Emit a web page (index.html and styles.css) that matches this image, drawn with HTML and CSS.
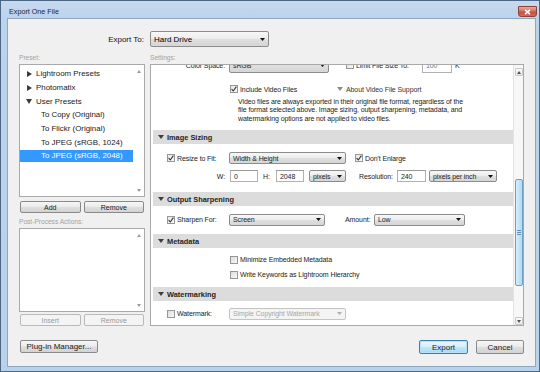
FILE: index.html
```html
<!DOCTYPE html>
<html>
<head>
<meta charset="utf-8">
<title>Export One File</title>
<link rel="stylesheet" href="styles.css">
</head>
<body>
<div class="window">
  <div class="titlebar">
    <span class="title">Export One File</span>
    <span class="close"><svg width="9" height="6" viewBox="0 0 9 6"><path d="M2 0.8 L7 5.2 M7 0.8 L2 5.2" stroke="#fff" stroke-width="1.7"/></svg></span>
  </div>
  <div class="client">
    <div class="export-row">
      <span class="export-label">Export To:</span>
      <div class="combo big"><span>Hard Drive</span><svg class="arr" width="5" height="3" viewBox="0 0 5 3"><path d="M0 0H5L2.5 3Z"/></svg></div>
    </div>

    <div class="body">
      <div class="left">
        <div class="caption">Preset:</div>
        <div class="listbox presets">
          <div class="items">
            <div class="item folder"><svg class="tri" width="5" height="6" viewBox="0 0 5 6"><path d="M0 0L5 3L0 6Z"/></svg><span>Lightroom Presets</span></div>
            <div class="item folder"><svg class="tri" width="5" height="6" viewBox="0 0 5 6"><path d="M0 0L5 3L0 6Z"/></svg><span>Photomatix</span></div>
            <div class="item folder"><svg class="tri open" width="6" height="5" viewBox="0 0 6 5"><path d="M0 0H6L3 5Z"/></svg><span>User Presets</span></div>
            <div class="item child"><span>To Copy (Original)</span></div>
            <div class="item child"><span>To Flickr (Original)</span></div>
            <div class="item child"><span>To JPEG (sRGB, 1024)</span></div>
            <div class="item child selected"><span>To JPEG (sRGB, 2048)</span></div>
          </div>
          <div class="lscroll">
            <svg width="4" height="3" viewBox="0 0 4 3"><path d="M0 3H4L2 0Z"/></svg>
            <svg width="4" height="3" viewBox="0 0 4 3"><path d="M0 0H4L2 3Z"/></svg>
          </div>
        </div>
        <div class="btn-row">
          <button class="btn small">Add</button>
          <button class="btn small">Remove</button>
        </div>
        <div class="caption cap2">Post-Process Actions:</div>
        <div class="listbox actions">
          <div class="items"></div>
          <div class="lscroll">
            <svg width="4" height="3" viewBox="0 0 4 3"><path d="M0 3H4L2 0Z"/></svg>
            <svg width="4" height="3" viewBox="0 0 4 3"><path d="M0 0H4L2 3Z"/></svg>
          </div>
        </div>
        <div class="btn-row row2">
          <button class="btn small" disabled>Insert</button>
          <button class="btn small" disabled>Remove</button>
        </div>
      </div>

      <div class="right">
        <div class="caption">Settings:</div>
        <div class="panel">
          <div class="pcontent">
            <div class="pinner">
              <div class="row r-color">
                <span class="lbl">Color Space:</span>
                <div class="combo sm tall w-color"><span>sRGB</span><svg class="arr" width="5" height="3" viewBox="0 0 5 3"><path d="M0 0H5L2.5 3Z"/></svg></div>
                <span class="cb cb-limit"></span>
                <span class="limit-text">Limit File Size To:</span>
                <div class="field tall w-limit">100</div>
                <span class="unit">K</span>
              </div>
              <div class="row r-video">
                <span class="cb checked"><svg width="6" height="6" viewBox="0 0 6 6"><path d="M0.6 3.2 L2.3 5 L5.4 0.6" fill="none" stroke="#333" stroke-width="1.1"/></svg></span>
                <span class="video-text">Include Video Files</span>
                <svg class="about-tri" width="6" height="4" viewBox="0 0 6 4"><path d="M0 0H6L3 4Z"/></svg>
                <span class="about-text">About Video File Support</span>
              </div>
              <div class="para">Video files are always exported in their original file format, regardless of the<br>file format selected above. Image sizing, output sharpening, metadata, and<br>watermarking options are not applied to video files.</div>

              <div class="sec sec-sizing"><svg class="stri" width="6" height="4" viewBox="0 0 6 4"><path d="M0 0H6L3 4Z"/></svg><span>Image Sizing</span></div>
              <div class="sbody b-sizing">
                <div class="row">
                  <span class="cb checked ind"><svg width="6" height="6" viewBox="0 0 6 6"><path d="M0.6 3.2 L2.3 5 L5.4 0.6" fill="none" stroke="#333" stroke-width="1.1"/></svg></span>
                  <span class="cblbl">Resize to Fit:</span>
                  <div class="combo sm w-fit"><span>Width &amp; Height</span><svg class="arr" width="5" height="3" viewBox="0 0 5 3"><path d="M0 0H5L2.5 3Z"/></svg></div>
                  <span class="cb checked cb-enlarge"><svg width="6" height="6" viewBox="0 0 6 6"><path d="M0.6 3.2 L2.3 5 L5.4 0.6" fill="none" stroke="#333" stroke-width="1.1"/></svg></span>
                  <span class="enlarge-text">Don't Enlarge</span>
                </div>
                <div class="row r-wh">
                  <span class="lbl wl">W:</span>
                  <div class="field w-num">0</div>
                  <span class="hl">H:</span>
                  <div class="field w-num">2048</div>
                  <div class="combo sm w-px"><span>pixels</span><svg class="arr" width="5" height="3" viewBox="0 0 5 3"><path d="M0 0H5L2.5 3Z"/></svg></div>
                  <span class="res-text">Resolution:</span>
                  <div class="field w-res">240</div>
                  <div class="combo sm w-ppi"><span>pixels per inch</span><svg class="arr" width="5" height="3" viewBox="0 0 5 3"><path d="M0 0H5L2.5 3Z"/></svg></div>
                </div>
              </div>

              <div class="sec"><svg class="stri" width="6" height="4" viewBox="0 0 6 4"><path d="M0 0H6L3 4Z"/></svg><span>Output Sharpening</span></div>
              <div class="sbody b-sharp">
                <div class="row">
                  <span class="cb checked ind"><svg width="6" height="6" viewBox="0 0 6 6"><path d="M0.6 3.2 L2.3 5 L5.4 0.6" fill="none" stroke="#333" stroke-width="1.1"/></svg></span>
                  <span class="cblbl">Sharpen For:</span>
                  <div class="combo sm w-screen"><span>Screen</span><svg class="arr" width="5" height="3" viewBox="0 0 5 3"><path d="M0 0H5L2.5 3Z"/></svg></div>
                  <span class="amount-text">Amount:</span>
                  <div class="combo sm w-low"><span>Low</span><svg class="arr" width="5" height="3" viewBox="0 0 5 3"><path d="M0 0H5L2.5 3Z"/></svg></div>
                </div>
              </div>

              <div class="sec"><svg class="stri" width="6" height="4" viewBox="0 0 6 4"><path d="M0 0H6L3 4Z"/></svg><span>Metadata</span></div>
              <div class="sbody b-meta">
                <div class="row">
                  <span class="cb meta-cb"></span>
                  <span>Minimize Embedded Metadata</span>
                </div>
                <div class="row r-write">
                  <span class="cb meta-cb"></span>
                  <span>Write Keywords as Lightroom Hierarchy</span>
                </div>
              </div>

              <div class="sec"><svg class="stri" width="6" height="4" viewBox="0 0 6 4"><path d="M0 0H6L3 4Z"/></svg><span>Watermarking</span></div>
              <div class="sbody b-wm">
                <div class="row">
                  <span class="cb ind"></span>
                  <span class="cblbl">Watermark:</span>
                  <div class="combo sm w-wm disabled"><span>Simple Copyright Watermark</span><svg class="arr" width="5" height="3" viewBox="0 0 5 3"><path d="M0 0H5L2.5 3Z"/></svg></div>
                </div>
              </div>
            </div>
          </div>
          <div class="pscroll">
            <div class="sbtn"><svg width="4" height="3" viewBox="0 0 4 3"><path d="M0 3H4L2 0Z"/></svg></div>
            <div class="thumb"><i></i><i></i><i></i></div>
            <div class="sbtn down"><svg width="4" height="3" viewBox="0 0 4 3"><path d="M0 0H4L2 3Z"/></svg></div>
          </div>
        </div>
      </div>
    </div>

    <div class="footer">
      <button class="btn plug">Plug-in Manager...</button>
      <button class="btn exp">Export</button>
      <button class="btn cancel">Cancel</button>
    </div>
  </div>
</div>
</body>
</html>
```

FILE: styles.css
```css
* { box-sizing: border-box; }
html, body { margin: 0; padding: 0; }
body {
  width: 540px;
  height: 372px;
  overflow: hidden;
  background: #b9d1ea;
  font-family: "Liberation Sans", Arial, sans-serif;
  color: #1e1e1e;
}

.window {
  width: 540px;
  height: 372px;
  border: 1px solid #4b6785;
  background: linear-gradient(#c6d9ef 0, #bcd3ec 18px, #b9d1ea 100%);
  display: flex;
  flex-direction: column;
}

.titlebar {
  height: 17px;
  flex: none;
  display: flex;
  align-items: flex-start;
  justify-content: space-between;
  padding: 0 2px 0 8px;
}
.title {
  font-size: 7.2px;
  line-height: 10px;
  margin-top: 6px;
  color: #1b2633;
}
.close {
  width: 19px;
  height: 11px;
  margin-top: 5px;
  border: 1px solid #8b4438;
  border-radius: 0 0 3px 3px;
  background: linear-gradient(#e8aa9c, #d37363 45%, #c44f3f 55%, #d06a58);
  display: flex;
  align-items: center;
  justify-content: center;
}

.client {
  flex: 1;
  margin: 0 3px 4px 6px;
  background: #f0f0f0;
  border: 1px solid #8fa6bf;
  padding: 12px 11px 0 11px;
  display: flex;
  flex-direction: column;
}

/* export to */
.export-row { display: flex; height: 16px; align-items: center; }
.export-label {
  width: 126px;
  margin-right: 5px;
  padding-right: 1px;
  text-align: right;
  font-size: 8px;
  color: #111;
}

.combo {
  display: flex;
  align-items: center;
  border: 1px solid #8c8c8c;
  border-radius: 2px;
  background: linear-gradient(#f7f7f7, #ececec 50%, #dfdfdf 51%, #d6d6d6);
  padding-left: 3px;
  white-space: nowrap;
  overflow: hidden;
  flex: none;
}
.combo .arr { margin-left: auto; margin-right: 3px; flex: none; fill: #111; }
.combo.big { width: 119px; height: 16px; font-size: 8px; color: #000; }
.combo.sm { height: 12px; font-size: 7px; letter-spacing: -0.1px; color: #222; }
.combo.tall { height: 16px; }
.combo.disabled { border-color: #c4c4c4; background: #f4f4f4; color: #a8a8a8; }
.combo.disabled .arr { fill: #b0b0b0; }

/* columns */
.body { display: flex; gap: 5px; margin-top: 5px; }
.left { width: 126px; display: flex; flex-direction: column; flex: none; }
.right { width: 374px; display: flex; flex-direction: column; flex: none; }

.caption {
  height: 11px;
  line-height: 11px;
  font-size: 6.6px;
  color: #a2a2a2;
}
.cap2 { margin-top: 3px; }

.listbox {
  margin-top: 1px;
  background: #fff;
  border: 1px solid #a9a9a9;
  display: flex;
}
.presets { height: 133px; }
.actions { height: 84px; }
.items { flex: 1; padding-top: 2px; }
.item {
  height: 13.7px;
  display: flex;
  align-items: center;
  font-size: 7.9px;
  color: #1a1a1a;
  white-space: nowrap;
}
.item.folder { padding-left: 7px; }
.item.folder .tri { fill: #3a3a3a; margin-right: 4px; flex: none; }
.item.folder .tri.open { margin-left: -1px; }
.item.child { padding-left: 21px; }
.item.selected {
  background: linear-gradient(#3399ff, #3399ff);
  background-size: 100% 12px;
  background-position: 0 1px;
  background-repeat: no-repeat;
  color: #fff;
}
.lscroll {
  width: 11px;
  flex: none;
  display: flex;
  flex-direction: column;
  justify-content: space-between;
  align-items: center;
  padding: 5px 0 4px 1px;
  fill: #9a9a9a;
}

/* buttons */
.btn {
  font-family: inherit;
  padding: 0;
  margin: 0;
  border: 1px solid #8a8a8a;
  border-radius: 2px;
  background: linear-gradient(#f6f6f6, #ebebeb 48%, #dedede 52%, #d3d3d3);
  color: #1a1a1a;
  display: flex;
  align-items: center;
  justify-content: center;
  white-space: nowrap;
}
.btn[disabled] {
  border-color: #b9b9b9;
  background: #f4f4f4;
  color: #9a9a9a;
}
.btn-row { display: flex; gap: 3px; padding: 0 1px; margin-top: 4px; }
.btn-row.row2 { margin-top: 2px; }
.btn.small { flex: 1; height: 12px; font-size: 7px; }

/* settings panel */
.panel {
  margin-top: 1px;
  height: 262px;
  border: 1px solid #a9a9a9;
  background: #fff;
  display: flex;
  overflow: hidden;
}
.pcontent { flex: 1; overflow: hidden; }
.pinner {
  margin-top: -8px;
  display: flex;
  flex-direction: column;
  font-size: 7px;
  letter-spacing: -0.1px;
  color: #222;
}
.row {
  height: 14px;
  display: flex;
  align-items: center;
  flex: none;
  white-space: nowrap;
}
.r-color { height: 16px; }

.lbl { width: 74px; margin-right: 4px; text-align: right; flex: none; }

.cb {
  width: 8px;
  height: 8px;
  flex: none;
  border: 1px solid #979797;
  background: linear-gradient(135deg, #dcdcdc, #f8f8f8);
  display: flex;
  align-items: center;
  justify-content: center;
  margin-right: 2px;
}
.cb.checked { background: linear-gradient(135deg, #e6e6e6, #fbfbfb); }
.cb.ind { margin-left: 16px; }
.cblbl { width: 52px; flex: none; }

.field {
  height: 12px;
  border: 1px solid #b0b0b0;
  border-top-color: #9a9a9a;
  background: #fff;
  font-size: 7px;
  display: flex;
  align-items: center;
  padding-left: 3px;
  flex: none;
}
.field.tall { height: 16px; }

/* row 1 */
.w-color { width: 100px; }
.cb-limit { margin-left: 17px; }
.limit-text { width: 66px; flex: none; }
.w-limit { width: 30px; color: #777; }
.unit { margin-left: 3px; }

/* video */
.r-video { margin-top: 9px; padding-left: 79px; }
.video-text { width: 97px; flex: none; }
.about-tri { fill: #8c8c8c; margin-right: 3px; flex: none; }
.about-text { color: #333; }
.para {
  margin-top: 1.5px;
  margin-left: 87px;
  line-height: 8.7px;
  white-space: nowrap;
  color: #222;
}

/* section headers */
.sec {
  margin-left: 2px;
  height: 14px;
  background: #dcdcdc;
  display: flex;
  align-items: center;
  padding-left: 5px;
  font-weight: bold;
  font-size: 7.4px;
  letter-spacing: 0;
  color: #1e1e1e;
  flex: none;
}
.sec-sizing { margin-top: 6.4px; }
.stri { fill: #3e3e3e; margin-right: 3px; flex: none; }

.sbody { display: flex; flex-direction: column; }
.b-sizing { padding: 7px 0 9px; }
.b-sizing .r-wh { margin-top: 4px; }
.b-sharp { padding: 6.5px 0 7.5px; }
.b-meta { padding: 4.5px 0 5.5px; padding-left: 79px; }
.b-meta .r-write { margin-top: 1px; }
.b-wm { padding: 5.5px 0 0; }

.w-fit { width: 117px; }
.cb-enlarge { margin-left: 9px; }
.wl { margin-right: 5px; }
.w-num { width: 28px; }
.hl { width: 13px; margin-left: 5px; flex: none; }
.w-px { width: 37px; margin-left: 5px; }
.res-text { margin-left: 13px; width: 35px; flex: none; }
.w-res { width: 29px; margin-left: 3px; }
.w-ppi { width: 68px; margin-left: 3px; }
.w-screen { width: 96px; }
.amount-text { margin-left: 20px; width: 29px; flex: none; }
.w-low { width: 91px; }
.w-wm { width: 117px; }

/* panel scrollbar */
.pscroll {
  width: 10px;
  flex: none;
  border-left: 1px solid #e3e3e3;
  background: #f7f7f7;
  display: flex;
  flex-direction: column;
  align-items: center;
}
.sbtn {
  width: 8px;
  height: 8px;
  margin-top: 3px;
  border: 1px solid #c9c9c9;
  border-radius: 1px;
  background: linear-gradient(#fbfbfb, #e9e9e9);
  display: flex;
  align-items: center;
  justify-content: center;
  fill: #555;
  flex: none;
}
.sbtn.down { margin-top: 31px; }
.thumb {
  width: 8px;
  height: 107px;
  margin-top: 103px;
  border: 1px solid #6c9fc6;
  border-radius: 2px;
  background: linear-gradient(90deg, #d9effb, #c3e3f6 50%, #b4daf1);
  display: flex;
  flex-direction: column;
  align-items: center;
  justify-content: center;
  gap: 1px;
  flex: none;
}
.thumb i { display: block; width: 4px; height: 1px; background: #5d8fb8; }

/* footer */
.footer { display: flex; margin-top: 14px; padding-left: 1px; }
.btn.plug { width: 78px; height: 13px; font-size: 8px; }
.btn.exp {
  margin-left: auto;
  width: 49px;
  height: 14px;
  font-size: 8px;
  border-color: #3c7fb1;
  box-shadow: inset 0 0 0 1px #b9e0f7;
  background: linear-gradient(#eaf6fd, #d9f0fc 48%, #bee6fd 52%, #a7d9f5);
}
.btn.cancel { margin-left: 8px; width: 48px; height: 14px; font-size: 8px; }
```
